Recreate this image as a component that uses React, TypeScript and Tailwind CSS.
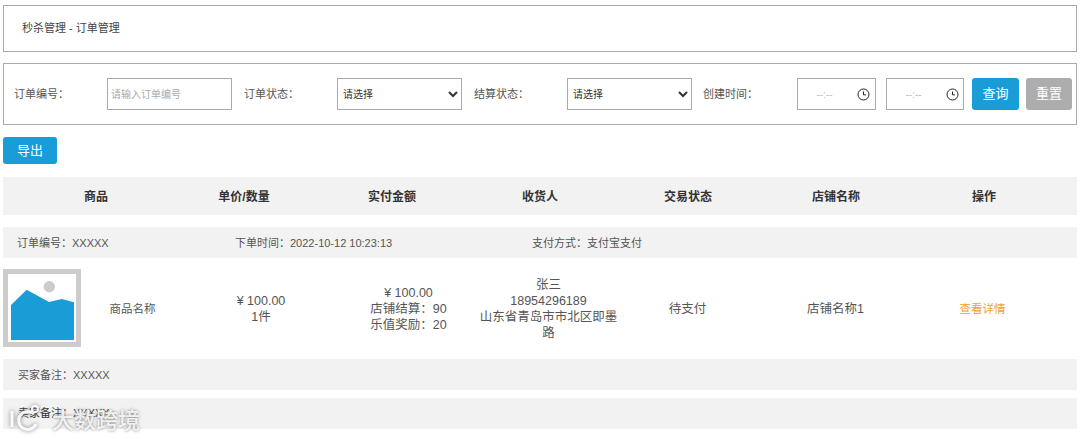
const Clock = () => (
  <svg width="13" height="13" viewBox="0 0 13 13" fill="none" stroke="#222" strokeWidth="1">
    <circle cx="6.5" cy="6.5" r="5.5" />
    <path d="M6.5 3.5v3.3h2.4" />
  </svg>
);

const TimeBox = ({ className }: { className: string }) => (
  <div className={`flex h-[32px] items-center justify-between border border-[#aaa] bg-white ${className}`}>
    <span className="w-[53px] text-center text-[10px] text-[#bbb]">--:--</span>
    <Clock />
  </div>
);

const Select = () => (
  <select className="h-[32px] w-[125px] rounded-none border border-[#aaa] bg-white pl-[1px] text-[10px] text-[#333]">
    <option>请选择</option>
  </select>
);

const headers = ["商品", "单价/数量", "实付金额", "收货人", "交易状态", "店铺名称", "操作"];
const colon = "\uFF1A";

export default function App() {
  return (
    <div className="relative h-[439px] w-[1080px] overflow-hidden bg-white px-[3px] pt-[5px] font-['Liberation_Sans','Noto_Sans_CJK_SC',sans-serif] text-[#555]">
      <div className="flex h-[47px] items-center border border-[#aaa] pl-[18px] text-[11px] text-[#444]">秒杀管理 - 订单管理</div>

      <div className="mt-[11px] flex h-[62px] items-center border border-[#aaa] pl-[10px] text-[11px]">
        <span className="w-[93px] pt-[1px]">订单编号{colon}</span>
        <input
          className="h-[32px] w-[125px] border border-[#aaa] px-[3px] text-[10px] outline-none placeholder:text-[#aaa]"
          placeholder="请输入订单编号"
        />
        <span className="ml-[12px] w-[93px] pt-[1px]">订单状态{colon}</span>
        <Select />
        <span className="ml-[12px] w-[93px] pt-[1px]">结算状态{colon}</span>
        <Select />
        <span className="ml-[11px] w-[94px] pt-[1px]">创建时间{colon}</span>
        <TimeBox className="w-[79px] pr-[5px]" />
        <TimeBox className="ml-[10px] w-[78px] pr-[4px]" />
        <button className="ml-[8px] h-[32px] w-[47px] rounded-[3px] bg-[#1a9cd6] text-[13px] text-white">查询</button>
        <button className="ml-[7px] h-[32px] w-[46px] rounded-[3px] bg-[#adadad] text-[13px] text-white">重置</button>
      </div>

      <button className="mt-[12px] block h-[27px] w-[54px] rounded-[3px] bg-[#1a9cd6] text-[13px] text-white">导出</button>

      <div className="mt-[13px] grid h-[38px] grid-cols-[repeat(7,148px)] items-center bg-[#f2f2f2] pl-[19px] pt-[1px] text-center text-[12px] font-bold text-[#333]">
        {headers.map((h) => (
          <span key={h}>{h}</span>
        ))}
      </div>

      <div className="mt-[12px] flex h-[31px] items-center bg-[#f2f2f2] pl-[14px] pt-[1px] text-[11px]">
        <span className="w-[218px]">订单编号{colon}XXXXX</span>
        <span className="w-[297px]">下单时间{colon}2022-10-12 10:23:13</span>
        <span>支付方式{colon}支付宝支付</span>
      </div>

      <div className="flex h-[101px] items-center text-center text-[12.5px] leading-[16px]">
        <div className="mb-[2px] h-[78px] w-[78px] border-[5px] border-[#ccc] bg-white">
          <svg viewBox="0 0 68 68" className="h-[68px] w-[68px]">
            <circle cx="41.3" cy="12.7" r="5.7" fill="#ccc" />
            <path d="M3 31 L18.7 15.7 L41 28 L53.7 25 L66 28.3 V66 H3 Z" fill="#1a9cd6" />
          </svg>
        </div>
        <span className="w-[103px] text-[11.5px]">商品名称</span>
        <div className="w-[154px]">
          ¥ 100.00
          <br />
          1件
        </div>
        <div className="w-[141px]">
          ¥ 100.00
          <br />
          店铺结算{colon}90
          <br />
          乐值奖励{colon}20
        </div>
        <div className="w-[139px]">
          张三
          <br />
          18954296189
          <br />
          山东省青岛市市北区即墨路
        </div>
        <div className="w-[139px]">待支付</div>
        <div className="w-[157px]">店铺名称1</div>
        <div className="w-[137px] text-[11.5px] text-[#f0a030]">查看详情</div>
      </div>

      <div className="flex h-[31px] items-center bg-[#f2f2f2] pl-[15px] pt-[1px] text-[11px]">买家备注{colon}XXXXX</div>
      <div className="mt-[8px] flex h-[31px] items-center bg-[#f2f2f2] pl-[15px] text-[11px] text-[#333]">卖家备注{colon}XXXXX</div>

      {/* watermark sits over the last row */}
      <div className="absolute left-[52px] top-[404px] text-[22px] font-medium text-white/85 [text-shadow:0_0_3px_#777]">
        大数跨境
      </div>
      <svg
        className="absolute left-[8px] top-[403px] drop-shadow-[0_0_2px_#777]"
        width="42"
        height="30"
        viewBox="0 0 42 30"
        fill="none"
        stroke="#fff"
        strokeOpacity=".9"
        strokeWidth="3"
      >
        <path d="M4 8v16" />
        <path d="M26 11a9 9 0 1 0 2 10" />
        <circle cx="27" cy="6" r="3" strokeWidth="2" />
      </svg>
    </div>
  );
}
